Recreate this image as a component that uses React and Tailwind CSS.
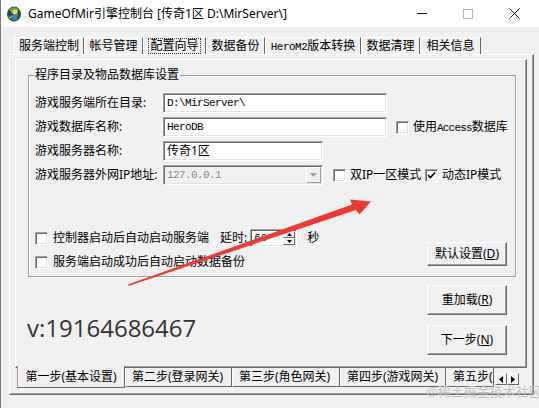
import React from "react";

const F = "font-['Noto_Sans','Noto_Sans_CJK_SC',sans-serif]";
const MONO = "font-['Liberation_Mono','Noto_Sans_CJK_SC',monospace]";
const SUNKEN =
  "border border-t-[#a0a0a0] border-l-[#a0a0a0] border-r-white border-b-white shadow-[inset_1px_1px_0_#696969,inset_-1px_-1px_0_#e3e3e3]";
const RAISED =
  "border border-t-white border-l-white border-r-[#696969] border-b-[#696969] shadow-[inset_-1px_-1px_0_#a0a0a0]";

function Check({ checked }) {
  return (
    <div className={"w-[13px] h-[13px] shrink-0 bg-white flex items-center justify-center " + SUNKEN}>
      {checked && (
        <svg width="9" height="9" viewBox="0 0 9 9">
          <path d="M1 4 L3.5 6.5 L8 1.5" fill="none" stroke="#000" strokeWidth="1.6" />
        </svg>
      )}
    </div>
  );
}

function Btn({ children, h }) {
  return (
    <div className={"w-[80px] flex items-center justify-center text-[12px] text-black bg-[#f0f0f0] " + h + " " + RAISED}>
      {children}
    </div>
  );
}

function Row({ label, children }) {
  return (
    <div className="flex items-center h-[20px]">
      <span className="w-[128px] shrink-0 text-[12px] text-black leading-[20px]">{label}</span>
      {children}
    </div>
  );
}

const topTabs = [
  ["服务端控制", 70],
  ["帐号管理", 59],
  ["配置向导", 63],
  ["数据备份", 59],
  ["HeroM2版本转换", 96],
  ["数据清理", 59],
  ["相关信息", 61],
];

const bottomTabs = [
  ["第二步(登录网关)", 107],
  ["第三步(角色网关)", 108],
  ["第四步(游戏网关)", 106],
  ["第五步(游戏网关)", 48],
];

export default function App() {
  return (
    <div className={"relative w-[539px] h-[408px] bg-[#f0f0f0] overflow-hidden border-l border-l-[#7a7a7a] " + F}>
      {/* Title bar */}
      <div className="h-[27px] bg-white flex items-center">
        <svg className="ml-[5px] shrink-0" width="17" height="17" viewBox="0 0 17 17">
          <ellipse cx="8" cy="9" rx="7" ry="7.5" fill="#2f4a3a" />
          <path d="M3 4 L8 2 L13 4 L11 8 L6 8 Z" fill="#4caf50" />
          <circle cx="9" cy="7" r="2.6" fill="#f4d03f" />
          <path d="M5 10 L12 9 L11 15 L6 15 Z" fill="#3b7dd8" />
          <path d="M2 12 L6 11 L5 14 Z" fill="#7fc241" />
        </svg>
        <span className="ml-[5px] text-[12px] text-black whitespace-nowrap">
          {"GameOfMir引擎控制台 [传奇1区 D:\\MirServer\\]"}
        </span>
        <div className="ml-auto flex h-full mr-[2px]">
          <div className="w-[46px] flex items-center justify-center">
            <div className="w-[10px] h-[1px] bg-[#222]" />
          </div>
          <div className="w-[46px] flex items-center justify-center">
            <div className="w-[10px] h-[10px] border border-[#bbb]" />
          </div>
          <div className="w-[46px] flex items-center justify-center">
            <svg width="11" height="11" viewBox="0 0 11 11">
              <path d="M0.5 0.5 L10.5 10.5 M10.5 0.5 L0.5 10.5" stroke="#222" strokeWidth="1" />
            </svg>
          </div>
        </div>
      </div>

      {/* Main */}
      <div className="ml-[8px] pt-[10px]">
        {/* top tabs */}
        <div className="flex h-[17px] ml-[5px]">
          {topTabs.map(([t, w], i) => (
            <div
              key={t}
              style={{ width: w }}
              className="h-[17px] flex items-center justify-center border-t border-t-white border-l border-l-white border-r border-r-[#696969] text-[12px] text-black whitespace-nowrap"
            >
              {i === 2 ? (
                <span className="border border-dotted border-[#333] px-[1px] leading-[14px]">{t}</span>
              ) : i === 4 ? (
                <span>
                  <span className={MONO + " text-[11px] tracking-[-0.5px]"}>HeroM2</span>版本转换
                </span>
              ) : (
                t
              )}
            </div>
          ))}
        </div>

        {/* outer frame */}
        <div className={"w-[525px] h-[341px] " + RAISED}>
          <div className="ml-[5px] mt-[4px] w-[512px]">
            {/* inner panel */}
            <div className={"h-[309px] flex flex-col " + RAISED}>
              {/* group box */}
              <div className="ml-[12px] mt-[15px] w-[488px] h-[202px] border border-[#a0a0a0] shadow-[inset_1px_1px_0_#fff,1px_1px_0_#fff] flex flex-col">
                <span className="self-start ml-[5px] -mt-[8px] h-[14px] leading-[14px] px-[1px] bg-[#f0f0f0] text-[12px] text-black">
                  程序目录及物品数据库设置
                </span>
                <div className="mt-[11px] pl-[6px] flex flex-col gap-[4px]">
                  <Row label="游戏服务端所在目录:">
                    <div className={"w-[224px] h-[20px] bg-white flex items-center pl-[3px] " + SUNKEN}>
                      <span className={MONO + " text-[11px] tracking-[-0.6px] text-black"}>{"D:\\MirServer\\"}</span>
                    </div>
                  </Row>
                  <Row label="游戏数据库名称:">
                    <div className={"w-[224px] h-[20px] bg-white flex items-center pl-[3px] " + SUNKEN}>
                      <span className={MONO + " text-[11px] tracking-[-0.6px] text-black"}>HeroDB</span>
                    </div>
                    <div className="ml-[9px]">
                      <Check />
                    </div>
                    <span className="ml-[4px] text-[12px] text-black whitespace-nowrap">
                      使用<span className={MONO + " text-[11px] tracking-[-0.8px]"}>Access</span>数据库
                    </span>
                  </Row>
                  <Row label="游戏服务器名称:">
                    <div className={"w-[160px] h-[20px] bg-white flex items-center pl-[3px] " + SUNKEN}>
                      <span className="text-[12px] text-black">传奇1区</span>
                    </div>
                  </Row>
                  <Row label="游戏服务器外网IP地址:">
                    <div className={"w-[160px] h-[20px] bg-[#f0f0f0] flex items-center pl-[3px] pr-[1px] " + SUNKEN}>
                      <span className={MONO + " text-[11px] tracking-[-0.6px] text-[#8a8a8a] flex-1"}>127.0.0.1</span>
                      <div className="w-[15px] h-[16px] border border-t-white border-l-white border-r-[#a0a0a0] border-b-[#a0a0a0] flex items-center justify-center">
                        <svg width="7" height="4" viewBox="0 0 7 4">
                          <path d="M0 0 L7 0 L3.5 4 Z" fill="#a0a0a0" />
                        </svg>
                      </div>
                    </div>
                    <div className="ml-[10px]">
                      <Check />
                    </div>
                    <span className="ml-[4px] w-[75px] text-[12px] text-black whitespace-nowrap">双IP一区模式</span>
                    <Check checked />
                    <span className="ml-[4px] text-[12px] text-black whitespace-nowrap">动态IP模式</span>
                  </Row>
                </div>

                <div className="mt-[43px] flex items-end justify-between">
                  <div className="pl-[6px] flex flex-col gap-[4px]">
                    <div className="flex items-center h-[20px]">
                      <Check />
                      <span className="ml-[5px] w-[156px] text-[12px] text-black whitespace-nowrap">控制器启动后自动启动服务端</span>
                      <span className="ml-[11px] text-[12px] text-black whitespace-nowrap">延时:</span>
                      <div className={"ml-[3px] w-[47px] h-[18px] bg-white flex items-center " + SUNKEN}>
                        <span className={MONO + " text-[11px] text-black pl-[3px] flex-1"}>60</span>
                        <div className="w-[12px] h-[14px] flex flex-col mr-[1px]">
                          <div className="h-[7px] border border-t-white border-l-white border-r-[#696969] border-b-[#696969] bg-[#f0f0f0] flex items-center justify-center">
                            <svg width="5" height="3" viewBox="0 0 5 3"><path d="M0 3 L5 3 L2.5 0 Z" fill="#000" /></svg>
                          </div>
                          <div className="h-[7px] border border-t-white border-l-white border-r-[#696969] border-b-[#696969] bg-[#f0f0f0] flex items-center justify-center">
                            <svg width="5" height="3" viewBox="0 0 5 3"><path d="M0 0 L5 0 L2.5 3 Z" fill="#000" /></svg>
                          </div>
                        </div>
                      </div>
                      <span className="ml-[10px] text-[12px] text-black">秒</span>
                    </div>
                    <div className="flex items-center h-[20px]">
                      <Check />
                      <span className="ml-[5px] text-[12px] text-black whitespace-nowrap">服务端启动成功后自动启动数据备份</span>
                    </div>
                  </div>
                  <div className="mr-[8px] mb-[6px]">
                    <Btn h="h-[24px]">
                      默认设置(<u>D</u>)
                    </Btn>
                  </div>
                </div>
              </div>

              {/* lower area */}
              <div className="ml-[12px] w-[488px] mt-[8px] flex justify-between">
                <div className="ml-[-1px] mt-[27px] h-[32px] leading-[32px] text-[24px] text-[#333] font-['Open_Sans',sans-serif]">
                  v:19164686467
                </div>
                <div className="mr-[9px] flex flex-col gap-[10px]">
                  <Btn h="h-[30px]">
                    重加载(<u>R</u>)
                  </Btn>
                  <Btn h="h-[30px]">
                    下一步(<u>N</u>)
                  </Btn>
                </div>
              </div>
            </div>

            {/* bottom tabs */}
            <div className="flex h-[20px] pl-[2px]">
              <div className="-mt-[2px] w-[108px] h-[22px] bg-[#f0f0f0] border-l border-l-[#a0a0a0] border-r border-r-[#696969] border-b border-b-[#696969] flex items-center justify-center text-[12px] text-black whitespace-nowrap">
                第一步(基本设置)
              </div>
              {bottomTabs.map(([t, w], i) => (
                <div
                  key={i}
                  style={{ width: w }}
                  className="h-[19px] overflow-hidden border-l border-l-white border-r border-r-[#696969] border-b border-b-[#696969] flex items-center pl-[6px] text-[12px] text-black whitespace-nowrap"
                >
                  {t}
                </div>
              ))}
              <div className="ml-[1px] mt-[5px] flex">
                <div className="w-[12px] h-[12px] border border-t-white border-l-white border-r-[#696969] border-b-[#696969] bg-[#f0f0f0] flex items-center justify-center">
                  <svg width="4" height="7" viewBox="0 0 4 7"><path d="M4 0 L4 7 L0 3.5 Z" fill="#000" /></svg>
                </div>
                <div className="w-[12px] h-[12px] border border-t-white border-l-white border-r-[#696969] border-b-[#696969] bg-[#f0f0f0] flex items-center justify-center">
                  <svg width="4" height="7" viewBox="0 0 4 7"><path d="M0 0 L0 7 L4 3.5 Z" fill="#000" /></svg>
                </div>
              </div>
            </div>
          </div>
        </div>
      </div>

      {/* watermark */}
      <div className="absolute left-[425px] top-[382px] text-[13px] text-[#c4c4c4] whitespace-nowrap pointer-events-none">
        @稀土掘金技术社区
      </div>

      {/* red arrow annotation */}
      <svg className="absolute left-0 top-0 pointer-events-none" width="539" height="408" viewBox="0 0 539 408">
        <path
          d="M127 284.5 L351 204.5 L349 199.5 L370 201.5 L358.5 214.5 L355 210 L128 285.8 Z"
          fill="#ea3b32"
        />
      </svg>
    </div>
  );
}
